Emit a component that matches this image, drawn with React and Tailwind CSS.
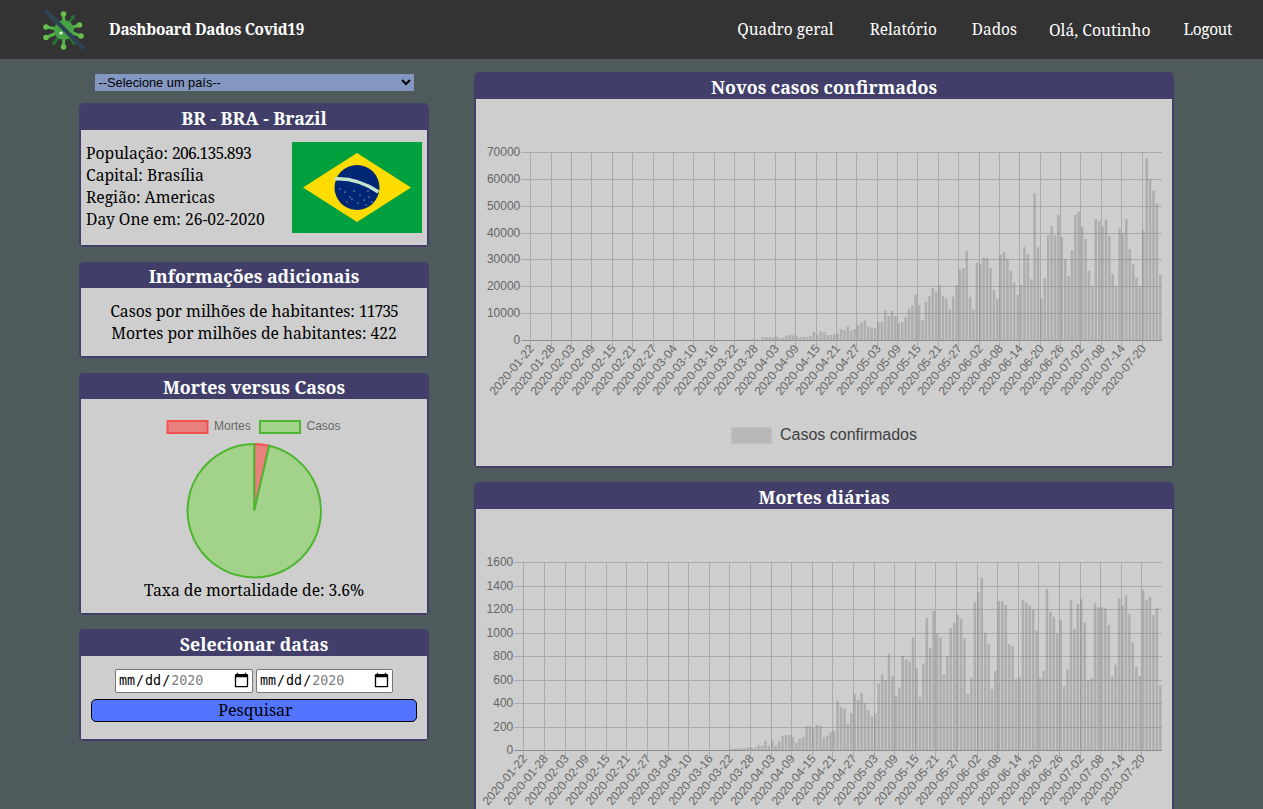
import React from "react";

// alturas em px das barras, lidas do grafico
const casos = [
  ...Array(60).fill(0), 0, 0, 0.3, 0.3, 0.3,
  0.7, 0.3, 0, 2.7, 2.7, 3, 2.3, 3.3, 1.7, 2.3, 4.3, 5, 4.7, 3.7, 2.3, 3.3, 3, 4, 8, 5, 8.3, 7.7, 5, 5, 6, 6.7, 11, 10, 13.7, 9.3, 11, 15, 17.3,
  19.7, 13.3, 12.7, 12, 18, 18, 29.3, 24, 29, 24, 17, 18, 22.7, 31.3, 34.3, 45.3, 35, 20, 38, 43.7, 52, 48.7, 55, 43.7, 41.7, 30.7, 43.3, 55,
  70.3, 72, 88.7, 43.3, 30.3, 77, 76, 82.3, 82, 72, 50, 41.3, 85.3, 88, 81, 69, 57.7, 45, 55, 93, 86, 60.7, 146.7, 92.7, 41.7, 61.7, 105, 114,
  105, 125, 103, 81, 64, 90, 125, 128.3, 112.7, 101, 69.3, 54, 121, 119, 113.7, 120.3, 104, 66, 54, 111.7, 107, 121, 91, 76, 62.3, 54, 109.3,
  181.7, 160.7, 149.3, 136.7, 65.3,
];

const mortes = [
  ...Array(60).fill(0),
  1, 1.3, 1.3, 2, 1.7, 2.7, 2.7, 2.3, 4.7, 4.3, 9.3, 4, 9.7, 4.3, 8.7, 14, 15.3, 15, 12.7, 7.3, 11.3, 12.7, 23.7, 23.7, 21.7, 25, 24.3, 12.7,
  14.3, 17.7, 19, 49.3, 43, 41.3, 26.3, 37, 56, 50,
  57, 47, 40, 33.3, 36.7, 66.3, 75.7, 70, 96.3, 74.3, 54, 61.7, 94, 90.7, 88.3, 112.7, 81.7, 53, 85.7, 132, 102, 139, 116.7, 112.7, 76, 94,
  121.7, 127, 135, 131.3, 111.7, 56, 72.3, 148, 158, 172.3, 117.3, 105.7, 61, 79, 149, 149, 145, 106, 104, 71, 72.7, 149.7, 148, 144.7, 140.7,
  119.3, 71.7, 79, 160.7, 138.3, 133.3, 116, 130, 64, 80.7, 150, 121, 146, 150.7, 127.3, 70, 71.7, 146.7, 142.7, 142.7, 141.7, 125, 73.3,
  85.3, 151.7, 144, 154.7, 136, 107.7, 83.3, 74, 160, 150, 153.3, 135, 141.7, 64.7,
];

const datas = [
  "01-22", "01-28", "02-03", "02-09", "02-15", "02-21", "02-27", "03-04", "03-10", "03-16", "03-22", "03-28", "04-03", "04-09", "04-15", "04-21",
  "04-27", "05-03", "05-09", "05-15", "05-21", "05-27", "06-02", "06-08", "06-14", "06-20", "06-26", "07-02", "07-08", "07-14", "07-20",
];

const BarChart = ({ barras, ticks, left }) => {
  const top = 53;
  const base = 241;
  const right = 686;
  const dia = (right - left) / 186;
  const passo = (base - top) / (ticks.length - 1);

  return (
    <svg width="696" height="367" className="block font-['Liberation_Sans',sans-serif]">
      {ticks.map((t, i) => (
        <g key={t}>
          <line x1={left - 9} x2={right} y1={Math.round(base - i * passo) + 0.5} y2={Math.round(base - i * passo) + 0.5} stroke={i === 0 ? "#8c8c8c" : "#aaaaaa"} />
          <text x={left - 10} y={base - i * passo + 4} textAnchor="end" fontSize="12" fill="#666">
            {t}
          </text>
        </g>
      ))}
      {datas.map((d, i) => {
        const x = Math.round(left + i * 6 * dia) + 0.5;
        return (
          <g key={d}>
            <line x1={x} x2={x} y1={top} y2={base + 8} stroke="#aaaaaa" />
            <text
              x={x + 4}
              y={base + 9}
              textAnchor="end"
              fontSize="12"
              fill="#666"
              transform={`rotate(-50 ${x + 4} ${base + 9})`}
            >
              2020-{d}
            </text>
          </g>
        );
      })}
      {barras.map((h, i) => (
        <rect key={i} x={left + (i + 0.5) * dia - 1.25} y={base - h} width="2.5" height={h} fill="rgba(128,128,128,0.4)" />
      ))}
      <rect x="255.5" y="328.5" width="40" height="16" fill="#b8b8b8" stroke="#c2c2c2" />
      <text x="304" y="341" fontSize="16" fill="#404040">
        Casos confirmados
      </text>
    </svg>
  );
};

const Card = ({ titulo, children, className, headerClass }) => (
  <div className={`border-2 border-[#413f6a] rounded-[5px] bg-[#413f6a] ${className || ""}`}>
    <div className={`text-white font-bold text-[17.8px] text-center ${headerClass || "h-[25px] leading-[27px]"}`}>{titulo}</div>
    <div className="bg-[#cecece]">{children}</div>
  </div>
);

const Logo = () => {
  const pontas = [
    [63.5, 13], [63.5, 46], [46, 26], [46, 36.5], [79.5, 24], [81, 35], [73, 16], [53, 18], [54, 42], [74, 42],
  ];
  return (
    <svg width="48" height="48" viewBox="40 5 48 48" className="block">
      {pontas.map(([x, y], i) => (
        <g key={i}>
          <line x1="64" y1="29" x2={x} y2={y} stroke={i > 5 ? "#2c6e35" : "#55b248"} strokeWidth="3" />
          <circle cx={x} cy={y} r={i > 5 ? 2 : 2.8} fill={i > 5 ? "#2c6e35" : "#68bd4d"} />
        </g>
      ))}
      <circle cx="64" cy="29" r="10" fill="#45a343" />
      <circle cx="61" cy="32" r="1.6" fill="#eef4ec" />
      <line x1="45" y1="9" x2="84" y2="48" stroke="#2e4353" strokeWidth="4" />
    </svg>
  );
};

const Bandeira = () => (
  <svg width="130" height="91" className="block shrink-0">
    <rect width="130" height="91" fill="#00a03e" />
    <polygon points="11,45.5 65,11 119,45.5 65,80" fill="#ffdc00" />
    <circle cx="65" cy="45.5" r="22.5" fill="#002776" />
    <path d="M42.8 37 Q64 35.5 86.5 50" fill="none" stroke="#c3e2cf" strokeWidth="3.5" />
    {[[48, 47], [53, 50], [58, 55], [62, 49], [68, 53], [72, 58], [77, 55], [55, 60], [66, 61], [74, 63], [80, 60], [60, 57], [76, 49]].map(([x, y]) => (
      <circle key={`${x}-${y}`} cx={x} cy={y} r="0.6" fill="#fff" />
    ))}
  </svg>
);

const Pizza = () => (
  <svg width="346" height="180" className="block font-['Liberation_Sans',sans-serif]">
    <rect x="86.5" y="22" width="40" height="12" fill="#e88080" stroke="#f55050" strokeWidth="2" />
    <text x="133" y="31" fontSize="12" fill="#666">Mortes</text>
    <rect x="179" y="22" width="40" height="12" fill="#a3d38a" stroke="#4db52f" strokeWidth="2" />
    <text x="225.5" y="31" fontSize="12" fill="#666">Casos</text>
    <path d="M173.2 111.8 L173.2 45.1 A66.7 66.7 0 0 1 188.2 46.8 Z" fill="#e88080" stroke="#f55050" strokeWidth="2" />
    <path d="M173.2 111.8 L188.2 46.8 A66.7 66.7 0 1 1 173.2 45.1 Z" fill="#a3d38a" stroke="#4db52f" strokeWidth="2" />
  </svg>
);

const dateClass =
  "h-[24px] bg-white border border-[#767676] rounded-[2px] text-[13.33px] px-[2px] font-['DejaVu_Sans_Mono',monospace] [&::-webkit-calendar-picker-indicator]:w-[17px] [&::-webkit-calendar-picker-indicator]:h-[17px] [&::-webkit-calendar-picker-indicator]:p-0";

export default function App() {
  return (
    <div className="h-screen overflow-hidden bg-[#4f5a5c] text-[15.7px] text-black font-['Noto_Serif','DejaVu_Serif',serif]">
      <nav className="h-[59px] bg-[#333333] text-white flex items-center pl-[40px] pr-[31px]">
        <Logo />
        <span className="ml-[21px] font-bold text-[15.3px] tracking-[-0.3px]">Dashboard Dados Covid19</span>
        <div className="ml-auto flex text-[15.4px] leading-[22px]">
          <a className="mr-[36px]">Quadro geral</a>
          <a className="mr-[35px]">Relatório</a>
          <a className="mr-[32px]">Dados</a>
          <a className="mr-[33px] text-[15.7px]">Olá, Coutinho</a>
          <a className="tracking-[-0.4px]">Logout</a>
        </div>
      </nav>

      <main className="flex pl-[79px] gap-[45px]">
        <div className="w-[350px] pt-[15px]">
          <select className="block mx-auto w-[319px] h-[17px] bg-[#8497c0] text-[12.8px] px-[0px] border-0 font-['Liberation_Sans',sans-serif]">
            <option>--Selecione um país--</option>
          </select>

          <Card titulo="BR - BRA - Brazil" className="mt-[12px]">
            <div className="flex justify-between px-[5px] py-[12px] leading-[22px]">
              <div>
                <div>
                  População: <span className="tracking-[-0.7px]">206.135.893</span>
                </div>
                <div>Capital: Brasília</div>
                <div>Região: Americas</div>
                <div>Day One em: 26-02-2020</div>
              </div>
              <Bandeira />
            </div>
          </Card>

          <Card titulo="Informações adicionais" className="mt-[15px]" headerClass="h-[24px] leading-[24px]">
            <div className="py-[12px] leading-[22px] text-center">
              <div>
                Casos por milhões de habitantes: <span className="tracking-[-1px]">11735</span>
              </div>
              <div>Mortes por milhões de habitantes: 422</div>
            </div>
          </Card>

          <Card titulo="Mortes versus Casos" className="mt-[15px]" headerClass="h-[24px] leading-[24px]">
            <div className="h-[214px]">
              <Pizza />
              <div className="leading-[22px] text-center">Taxa de mortalidade de: 3.6%</div>
            </div>
          </Card>

          <Card titulo="Selecionar datas" className="mt-[14px]">
            <div className="h-[83px] pt-[13px] px-[10px]">
              <div className="flex justify-center gap-[3px]">
                <input type="date" min="2020-01-22" max="2020-07-26" className={`w-[138px] ${dateClass}`} />
                <input type="date" min="2020-01-22" max="2020-07-26" className={`w-[137px] ${dateClass}`} />
              </div>
              <button className="block w-[326px] h-[23px] mt-[6px] pl-[3px] pb-[2px] bg-[#5274ff] border border-black rounded-[5px] text-[16px] leading-none">
                Pesquisar
              </button>
            </div>
          </Card>
        </div>

        <div className="w-[700px] pt-[13px]">
          <Card titulo="Novos casos confirmados">
            <BarChart barras={casos} left={54.3} ticks={[0, 10000, 20000, 30000, 40000, 50000, 60000, 70000]} />
          </Card>
          <Card titulo="Mortes diárias" className="mt-[14px]">
            <BarChart barras={mortes} left={47.3} ticks={[0, 200, 400, 600, 800, 1000, 1200, 1400, 1600]} />
          </Card>
        </div>
      </main>
    </div>
  );
}
